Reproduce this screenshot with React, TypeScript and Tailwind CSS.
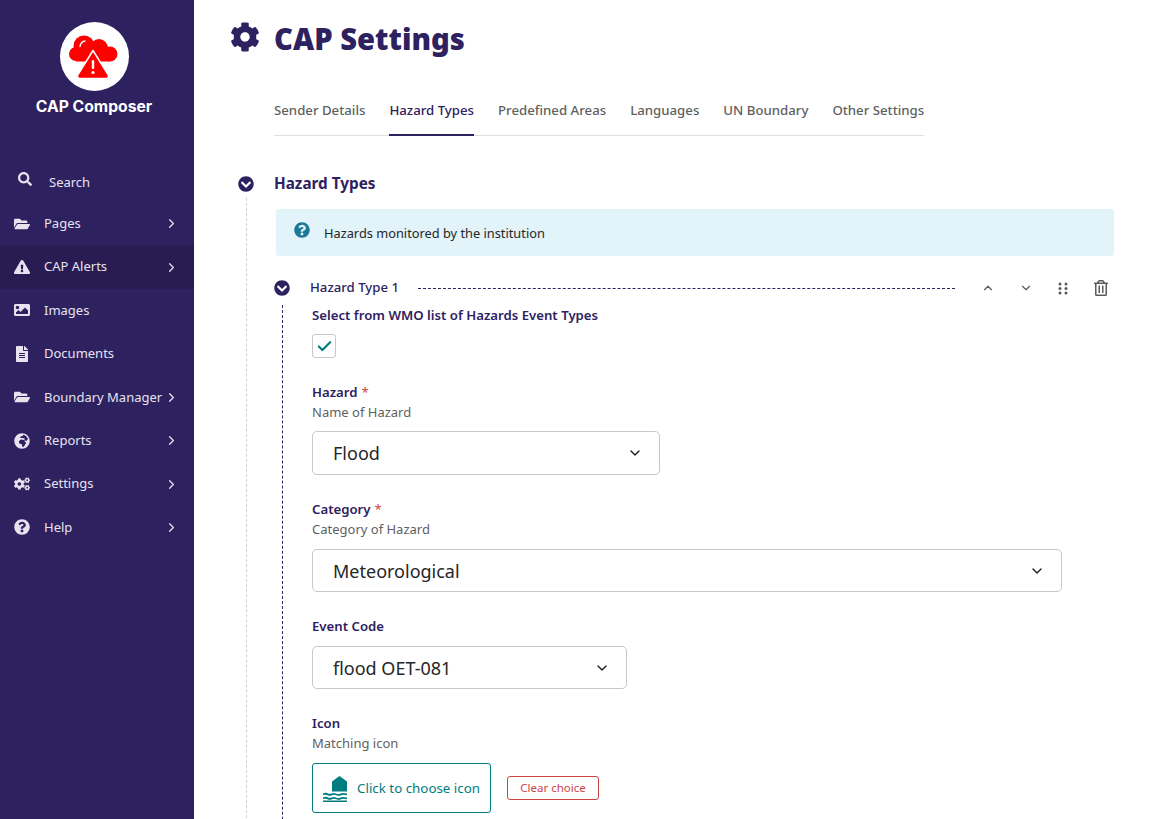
import React from "react";
import { ChevronDown, ChevronRight, ChevronUp, Check } from "lucide-react";
import {
  FaCog,
  FaCogs,
  FaExclamationTriangle,
  FaFileAlt,
  FaFolderOpen,
  FaGlobeAfrica,
  FaImage,
  FaQuestionCircle,
  FaRegTrashAlt,
  FaSearch,
  FaChevronCircleDown,
} from "react-icons/fa";

const navItems = [
  { label: "Pages", icon: FaFolderOpen, arrow: true, active: false },
  { label: "CAP Alerts", icon: FaExclamationTriangle, arrow: true, active: true },
  { label: "Images", icon: FaImage, arrow: false, active: false },
  { label: "Documents", icon: FaFileAlt, arrow: false, active: false },
  { label: "Boundary Manager", icon: FaFolderOpen, arrow: true, active: false },
  { label: "Reports", icon: FaGlobeAfrica, arrow: true, active: false },
  { label: "Settings", icon: FaCogs, arrow: true, active: false },
  { label: "Help", icon: FaQuestionCircle, arrow: true, active: false },
];

const tabs = ["Sender Details", "Hazard Types", "Predefined Areas", "Languages", "UN Boundary", "Other Settings"];

const Logo = () => (
  <div className="w-[69px] h-[69px] rounded-full bg-white flex items-center justify-center">
    <svg width="50" height="44" viewBox="0 0 50 44">
      <g fill="#ff0000">
        <circle cx="15" cy="11" r="10.500" />
        <circle cx="30" cy="13" r="9" />
        <circle cx="7" cy="19" r="7" />
        <circle cx="41" cy="19" r="7.500" />
        <rect x="7" y="15" width="34" height="11.500" />
      </g>
      <path d="M11 11.500c.4-3 2.500-5 5-5.500" stroke="#fff" strokeWidth="1.300" fill="none" strokeLinecap="round" />
      <path
        d="M24 15.500 9 39.500c-1.300 2.200 0 4 2.500 4h25c2.500 0 3.800-1.800 2.500-4z"
        fill="#ff0000"
        stroke="#fff"
        strokeWidth="1.500"
        strokeLinejoin="round"
      />
      <rect x="22.800" y="25" width="2.400" height="9" rx="1.200" fill="#fff" />
      <circle cx="24" cy="37.500" r="1.600" fill="#fff" />
    </svg>
  </div>
);

const Sidebar = () => (
  <aside className="w-[194px] shrink-0 h-full bg-[#2e2160] text-[#e6e3ef] font-['Noto_Sans',sans-serif] text-[13px]">
    <div className="flex flex-col items-center pt-[22px] pr-[6px]">
      <Logo />
      <div className="mt-[6px] text-white font-bold text-[15.700px] leading-[20px] font-['Inter',sans-serif]">CAP Composer</div>
    </div>
    <div className="h-[39.500px] mt-[45.500px] flex items-center pl-[18px]">
      <FaSearch className="w-[14px] h-[14px] -mt-[7px]" />
      <span className="ml-[17px] mt-px">Search</span>
    </div>
    <nav>
      {navItems.map((item) => {
        const Icon = item.icon;
        return (
          <div
            key={item.label}
            className={`h-[43.400px] flex items-center pl-[14px] pr-[15px] ${item.active ? "bg-[#291c53]" : ""}`}
          >
            <span className="w-[16px] flex justify-center">
              <Icon className="w-[16px] h-[16px]" />
            </span>
            <span className="ml-[14px] flex-1 whitespace-nowrap">{item.label}</span>
            {item.arrow && <ChevronRight className="w-[15px] h-[15px]" strokeWidth={2} />}
          </div>
        );
      })}
    </nav>
  </aside>
);

const Label = ({ text, required, help, tight }: { text: string; required?: boolean; help?: string; tight?: boolean }) => (
  <div className={tight ? "mb-[9px]" : "mb-[10px]"}>
    <div className="text-[13.200px] leading-[20px] font-semibold text-[#2e2160]">
      {text}
      {required && <span className="text-[#cd4444] ml-[4px] font-normal">*</span>}
    </div>
    {help && <div className="text-[13px] leading-[20px] text-[#5f5f5f]">{help}</div>}
  </div>
);

const SelectBox = ({ value, width, tall }: { value: string; width: string; tall?: boolean }) => (
  <div
    className={`${width} ${tall ? "h-[44px]" : "h-[43px]"} border border-[#c8c8c8] rounded-[5px] flex items-center pl-[20px] pr-[16px] bg-white`}
  >
    <span className={`flex-1 text-[18px] text-[#262626] ${tall ? "" : "mt-px"}`}>{value}</span>
    <ChevronDown className="w-[16px] h-[16px] text-[#1a1a1a]" strokeWidth={2} />
  </div>
);

const FloodIcon = () => (
  <svg width="26" height="28" viewBox="0 0 26 28" fill="#007d7e">
    <path d="M10 7.500 17.500 2 25 7.500V17.500H10z" />
    <path d="M1 19.500c2-.8 3.500-.8 4.500-.2s2.500.8 4 .2 3-.8 4.500 0 3 .6 4.500 0 3-.8 6.500 0v1.800c-3-.8-4.500-.8-6 0s-3 .6-4.500 0-3-.8-4.500 0-3 .6-4.500 0-2.500-.8-4.500 0z" />
    <path d="M1 23.500c2-.8 3.500-.8 4.500-.2s2.500.8 4 .2 3-.8 4.500 0 3 .6 4.500 0 3-.8 6.500 0v1.800c-3-.8-4.500-.8-6 0s-3 .6-4.500 0-3-.8-4.500 0-3 .6-4.500 0-2.500-.8-4.500 0z" />
    <rect x="1" y="26.500" width="24" height="1.500" />
  </svg>
);

const HazardBlock = () => (
  <div>
    <div className="h-[20px] -ml-[2px] flex items-center">
      <FaChevronCircleDown className="w-[16px] h-[16px] text-[#2e2160]" />
      <span className="ml-[20px] text-[13.200px] font-medium text-[#2e2160] whitespace-nowrap">Hazard Type 1</span>
      <div className="ml-[19px] flex-1 border-t border-dashed border-[#2e2160]" />
      <div className="ml-[26px] mr-[6px] -mt-px flex items-center text-[#5a5a5a]">
        <ChevronUp className="w-[14px] h-[14px]" />
        <ChevronDown className="w-[14px] h-[14px] ml-[24px] mr-[25px]" />
        <svg width="10" height="14" viewBox="0 0 10 14" fill="#5a5a5a">
          <circle cx="2" cy="3" r="1.500" />
          <circle cx="8" cy="3" r="1.500" />
          <circle cx="2" cy="7.500" r="1.500" />
          <circle cx="8" cy="7.500" r="1.500" />
          <circle cx="2" cy="12" r="1.500" />
          <circle cx="8" cy="12" r="1.500" />
        </svg>
        <FaRegTrashAlt className="w-[14px] h-[16px] ml-[26px]" />
      </div>
    </div>
    <div className="ml-[6px] mt-[8px] border-l border-dashed border-[#2e2160] pl-[29px] h-[600px]">
      <div className="text-[13.200px] leading-[20px] font-semibold text-[#2e2160] -mt-px">Select from WMO list of Hazards Event Types</div>
      <div className="mt-[9px] w-[24px] h-[24px] border border-[#c8c8c8] rounded-[3px] flex items-center justify-center">
        <Check className="w-[17px] h-[17px] text-[#007d7e]" strokeWidth={3} />
      </div>
      <div className="mt-[24px]">
        <Label text="Hazard" required help="Name of Hazard" tight />
        <SelectBox value="Flood" width="w-[348px]" tall />
      </div>
      <div className="mt-[24px]">
        <Label text="Category" required help="Category of Hazard" />
        <SelectBox value="Meteorological" width="w-[750px]" />
      </div>
      <div className="mt-[24px]">
        <Label text="Event Code" />
        <SelectBox value="flood OET-081" width="w-[315px]" />
      </div>
      <div className="mt-[24px]">
        <Label text="Icon" help="Matching icon" />
        <div className="flex items-center">
          <div className="w-[179px] h-[50px] border border-[#007d7e] rounded-[3px] flex items-center pl-[9px] text-[13.350px] text-[#007d7e]">
            <FloodIcon />
            <span className="ml-[9px] whitespace-nowrap">Click to choose icon</span>
          </div>
          <div className="ml-[16px] w-[92px] h-[24px] border border-[#cd4444] rounded-[3px] flex items-center justify-center text-[11.500px] text-[#cd4444]">
            Clear choice
          </div>
        </div>
      </div>
    </div>
  </div>
);

const App: React.FC = () => {
  return (
    <div className="flex w-[1162px] h-[819px] overflow-hidden bg-white font-['Noto_Sans',sans-serif]">
      <Sidebar />
      <main className="flex-1 pl-[36px] pr-[48px]">
        <div className="flex items-center h-[40px] mt-[19px]">
          <FaCog className="w-[30px] h-[30px] text-[#2e2160] -mt-[4px]" />
          <h1 className="ml-[14px] text-[29.200px] font-black text-[#2e2160] whitespace-nowrap leading-[40px]">CAP Settings</h1>
        </div>
        <div className="ml-[44px] mt-[31px] w-[650px] flex gap-[24px] border-b border-[#e0e0e0] h-[46px] text-[13.220px] font-medium">
          {tabs.map((tab) => (
            <div
              key={tab}
              className={`h-[46px] pt-[11px] whitespace-nowrap ${
                tab === "Hazard Types" ? "text-[#2e2160] border-b-2 border-[#2e2160]" : "text-[#5f5f5f]"
              }`}
            >
              {tab}
            </div>
          ))}
        </div>
        <div className="mt-[37px] flex items-center h-[22px]">
          <span className="w-[16px] ml-[8px] flex justify-center">
            <FaChevronCircleDown className="w-[16px] h-[16px] text-[#2e2160]" />
          </span>
          <h2 className="ml-[20px] -mt-[2px] text-[15.300px] font-bold text-[#2e2160]">Hazard Types</h2>
        </div>
        <div className="ml-[16px] mt-[3px] border-l border-dashed border-[#d0d0d0] pl-[29px] h-[640px] pt-[11px]">
          <div className="h-[47px] bg-[#e2f3fa] rounded-[3px] flex items-center pl-[18px]">
            <FaQuestionCircle className="w-[16px] h-[16px] text-[#1b7a9a] -mt-[6px]" />
            <span className="ml-[14px] text-[12.800px] text-[#262626] mt-[3px]">Hazards monitored by the institution</span>
          </div>
          <div className="mt-[22px]">
            <HazardBlock />
          </div>
        </div>
      </main>
    </div>
  );
};

export default App;
